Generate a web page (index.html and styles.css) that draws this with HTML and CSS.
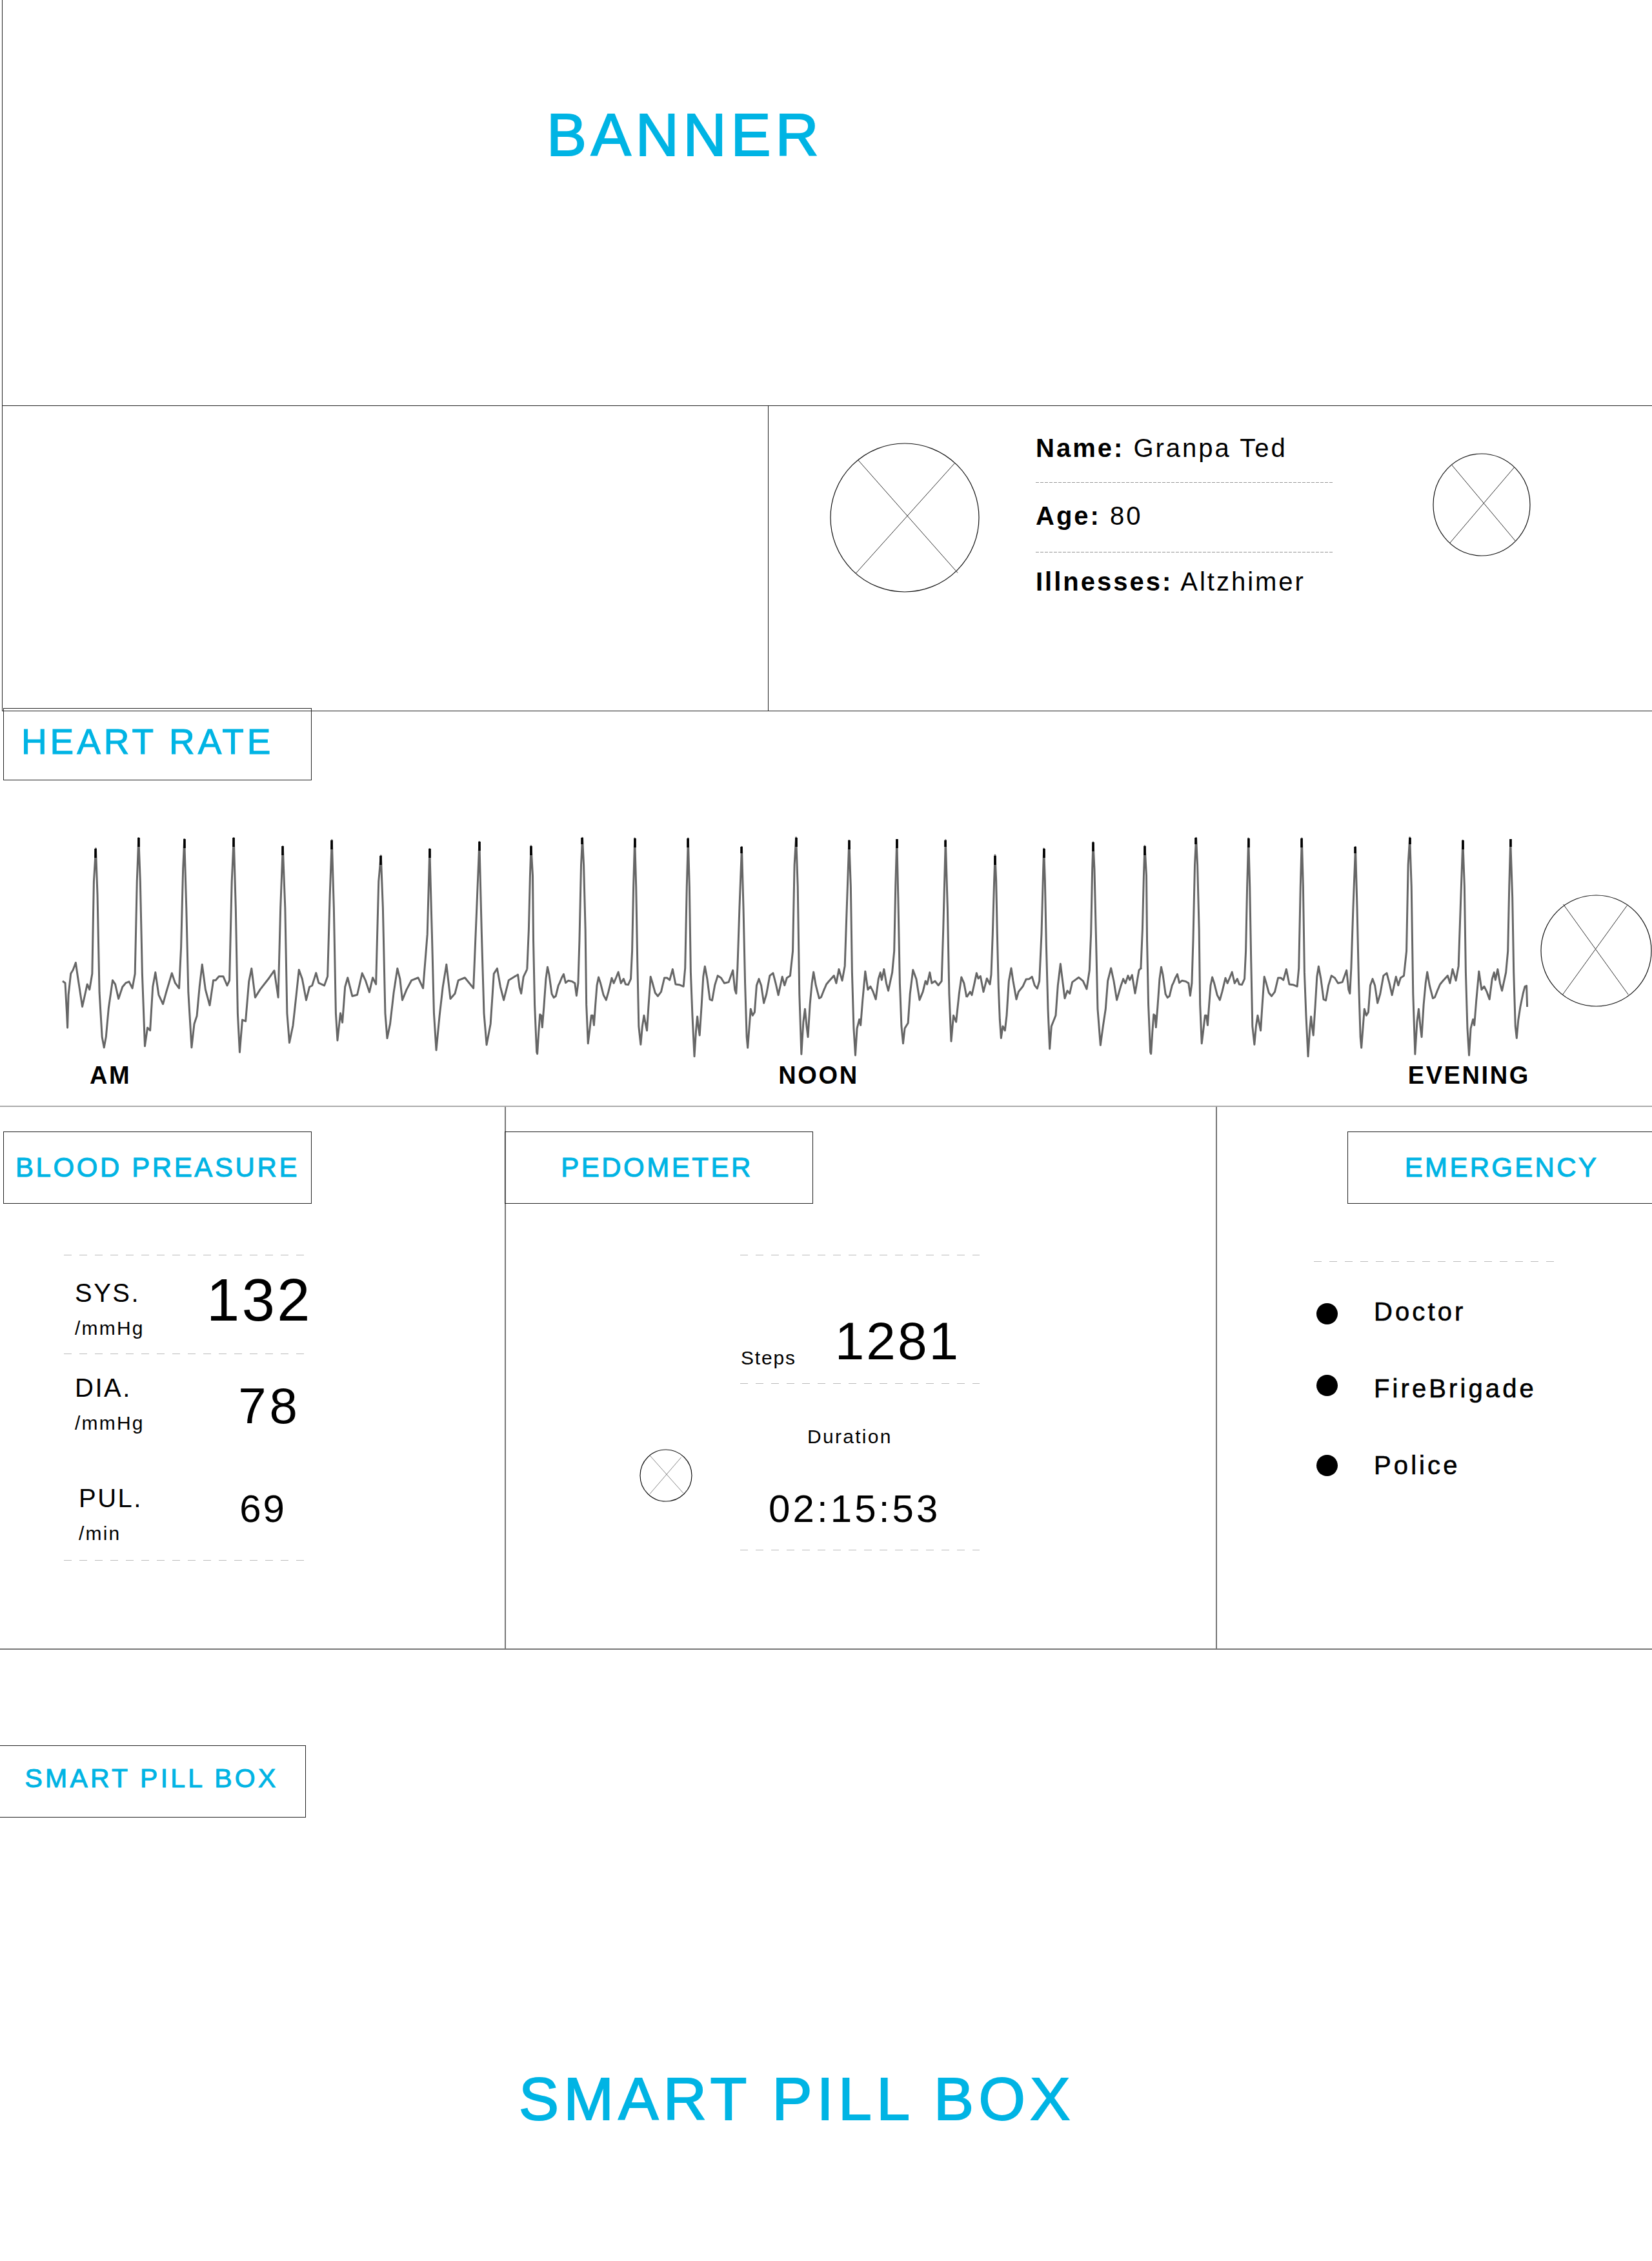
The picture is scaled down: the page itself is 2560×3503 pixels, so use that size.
FILE: index.html
```html
<!DOCTYPE html>
<html lang="en">
<head>
    <meta charset="UTF-8">
    <meta name="viewport" content="width=device-width, initial-scale=1.0">
    <title>Smart Pill Box</title>
    <link rel="stylesheet" href="styles.css">
</head>
<body>
<div class="page">
    <section class="banner">
        <h1 class="banner-title">BANNER</h1>
    </section>

    <section class="profile">
        <div class="profile-left"></div>
        <div class="profile-right">
            <svg class="avatar" viewBox="-116 -116 232 232">
                <circle r="115"/>
                <line x1="-72.5" y1="-89.5" x2="82" y2="85.5"/>
                <line x1="77.5" y1="-84.5" x2="-76" y2="86.5"/>
            </svg>
            <div class="info">
                <p class="info-row info-name"><b>Name:</b> Granpa Ted</p>
                <p class="info-row info-age"><b>Age:</b> 80</p>
                <p class="info-row info-ill"><b>Illnesses:</b> Altzhimer</p>
            </div>
            <svg class="profile-icon" viewBox="-76 -80 152 160">
                <ellipse rx="75" ry="79"/>
                <line x1="-46.6" y1="-62" x2="53" y2="57"/>
                <line x1="50.6" y1="-58" x2="-49" y2="59"/>
            </svg>
        </div>
    </section>

    <section class="heart">
        <h2 class="tag tag-heart">HEART RATE</h2>
        <div class="chart-row">
            <svg class="ecg" viewBox="88 1290 2280 357">
                <!-- traced in three pieces, the middle one repeats further along -->
                <g transform="translate(0 1080) scale(.5102 .4082)">
                    <polyline points="190,1078 198,1085 203,1200 205,1255 208,1130 215,1050 222,1035 230,1008 236,1060 250,1175 258,1130 265,1090 272,1110 280,1050 285,700 291,575 296,750 302,1120 310,1290 316,1330 322,1290 330,1180 342,1075 350,1090 360,1145 372,1100 382,1085 392,1080 402,1105 410,1050 416,700 421,535 426,700 432,1050 440,1325 448,1255 456,1265 464,1100 472,1045 482,1130 495,1165 505,1120 522,1048 532,1085 544,1105 550,950 556,650 560,540 566,800 572,1120 582,1330 590,1240 598,1210 606,1100 614,1015 624,1110 637,1170 648,1075 655,1075 665,1060 678,1060 690,1095 697,1075 704,700 710,535 716,800 722,1200 728,1348 736,1225 746,1230 756,1080 764,1030 775,1140 790,1110 815,1070 833,1038 845,1140 852,800 859,567 866,800 872,1200 879,1312 890,1245 900,1130 908,1035 918,1070 930,1150 940,1100 948,1095 960,1047 968,1085 985,1095 995,1060 1002,750 1008,543 1014,800 1020,1200 1025,1303 1034,1200 1040,1235 1048,1100 1056,1065 1070,1135 1085,1130 1100,1048 1110,1075 1122,1120 1132,1065 1142,1090 1150,700 1157,602 1163,800 1170,1200 1176,1295 1185,1240 1196,1120 1207,1030 1215,1070 1222,1150 1235,1110 1250,1075 1270,1065 1285,1105 1298,900 1305,577 1312,900 1318,1200 1325,1340 1335,1210 1345,1100 1356,1015 1368,1145 1382,1125 1392,1075 1412,1065 1438,1105 1448,800 1456,550 1463,900 1470,1200 1478,1320 1490,1240 1500,1050 1510,1030 1520,1100 1530,1150 1545,1075 1568,1057"/>
                </g>
                <g transform="translate(800 1240) scale(.5102 .3333)">
                    <polyline points="0,815 5,810 10,870 15,898 22,820 33,785"/>
                    <polyline id="ecg-mid" points="33,785 38,600 42,350 45,212 50,350 52,650 56,950 62,1170 64,1178 68,1080 72,995 76,1000 79,1055 84,960 90,830 95,775 100,810 108,900 114,917 120,910 128,860 132,848 138,825 144,808 150,848 158,838 170,842 178,850 183,908 188,850 192,650 197,300 201,175 205,300 210,600 213,950 218,1130 222,1080 228,1000 232,1000 236,1045 240,960 245,860 250,822 256,850 265,905 273,928 280,890 290,826 296,850 303,825 310,798 318,850 326,830 332,855 340,857 348,830 352,700 356,400 360,177 364,400 368,750 372,1050 378,1135 383,1050 388,1000 393,1040 397,1070 402,950 408,820 414,850 422,895 430,910 440,890 450,825 458,825 466,835 475,785 484,855 495,857 508,865 513,780 518,400 522,177 526,400 530,800 535,1000 541,1190 546,1070 550,1005 554,1060 557,1092 563,950 568,820 573,772 580,830 588,925 595,930 603,860 612,815 622,825 632,850 645,845 658,790 664,880 668,898 672,780 678,500 685,217 690,500 695,850 700,1100 703,1150 708,1050 712,970 718,1000 724,985 730,860 737,830 744,860 752,942 760,900 770,815 780,803 788,850 796,905 808,820 815,860 822,825 832,815 840,700 845,300 850,173 855,400 860,900 866,1180 872,1030 877,970 882,1050 886,1100 892,950 898,850 903,798 910,860 920,920 926,915 935,880 942,855 950,840 965,815 972,850 980,785 990,838 998,770 1004,500 1011,187 1016,400 1020,800 1025,1060 1030,1185 1035,1060 1042,1018 1046,1045 1052,930 1060,795 1068,880 1076,865 1084,890 1092,925 1100,830 1106,800 1110,835 1117,785 1124,850 1130,885 1142,800 1148,700 1152,400 1156,181"/>
                    <polyline points="1156,181 1160,450 1165,850 1170,1050 1175,1130 1180,1060 1190,1035 1196,900 1205,788 1215,830 1225,928 1235,890 1243,840 1248,855 1256,800 1262,850 1272,840 1282,860 1292,840 1297,600 1304,185 1310,500 1315,900 1321,1120 1328,1000 1336,1030 1345,900 1352,822 1360,850 1368,915"/>
                    <use href="#ecg-mid" x="1864"/>
                </g>
                <g transform="translate(1500 1280) scale(.3333)">
                    <polyline points="-6,795 10,770 18,785 28,740 40,683 48,708 58,697 72,770 88,708 102,735 108,690 115,500 122,250 126,135 131,250 136,500 142,750 148,900 154,985 162,930 172,950 180,880 190,720 201,660 210,720 225,805 235,770 255,745 270,712 285,710 298,700 310,740 322,755 332,720 342,500 350,200 353,105 358,250 364,550 372,850 380,1035 388,930 408,880 418,740 430,640 440,720 450,800 462,765 473,778 485,725 515,703 535,720 552,757 565,670 572,500 578,200 582,75 588,200 595,500 603,850 616,1018 628,930 640,850 650,720 665,660 678,720 692,808 710,745 722,710 732,730 744,695 752,715 763,692 777,777 795,670 806,658"/>
                </g>
                <g transform="translate(1760 1240) scale(.5102 .3333)">
                    <polyline points="1138,181 1144,450 1148,800 1153,1050 1157,1105 1162,1020 1168,960 1176,900 1182,865 1187,862 1189,960"/>
                </g>
                <path class="ecg-tips" d="M148 1315v14M215 1298v14M286 1300v14M362 1298v14M438 1311v14M514 1302v14M590 1326v14M666 1315v14M743 1304v14M823 1311v14M902 1298v10M984 1299v14M1066 1299v14M1149 1312v10M1234 1298v14M1316 1302v14M1390 1300v14M1465 1302v10M1542 1326v14M1618 1315v14M1694 1305v14M1774 1311v14M1853 1298v10M1935 1299v14M2017 1299v14M2100 1312v10M2185 1298v10M2267 1302v14M2341 1300v12"/>
            </svg>
            <svg class="heart-icon" viewBox="-86.5 -87 173 174">
                <ellipse rx="85.5" ry="86"/>
                <line x1="-51" y1="-72" x2="49.8" y2="68"/>
                <line x1="48" y1="-70.3" x2="-52" y2="68"/>
            </svg>
        </div>
        <div class="times">
            <span class="time-am">AM</span>
            <span class="time-noon">NOON</span>
            <span class="time-evening">EVENING</span>
        </div>
    </section>

    <section class="panels">
        <div class="panel">
            <h2 class="tag tag-panel tag-blood">BLOOD PREASURE</h2>
            <div class="vitals">
                <div class="dash"></div>
                <div class="vital vital-sys">
                    <div class="vital-label">
                        <div class="vital-name">SYS.</div>
                        <div class="vital-unit">/mmHg</div>
                    </div>
                    <div class="vital-value">132</div>
                </div>
                <div class="dash"></div>
                <div class="vital vital-dia">
                    <div class="vital-label">
                        <div class="vital-name">DIA.</div>
                        <div class="vital-unit">/mmHg</div>
                    </div>
                    <div class="vital-value">78</div>
                </div>
                <div class="vital vital-pul">
                    <div class="vital-label">
                        <div class="vital-name">PUL.</div>
                        <div class="vital-unit">/min</div>
                    </div>
                    <div class="vital-value">69</div>
                </div>
                <div class="dash"></div>
            </div>
        </div>

        <div class="panel panel-line">
            <h2 class="tag tag-panel tag-pedo">PEDOMETER</h2>
            <div class="pedo">
                <svg class="pedo-icon" viewBox="-41 -41 82 82">
                    <circle r="40"/>
                    <line x1="-25" y1="-31" x2="27" y2="27.5"/>
                    <line x1="23.5" y1="-28" x2="-25" y2="28.5"/>
                </svg>
                <div class="pedo-stats">
                    <div class="dash"></div>
                    <div class="steps">
                        <span class="steps-label">Steps</span>
                        <span class="steps-value">1281</span>
                    </div>
                    <div class="dash"></div>
                    <div class="duration-label">Duration</div>
                    <div class="duration-value">02:15:53</div>
                    <div class="dash"></div>
                </div>
            </div>
        </div>

        <div class="panel panel-line panel-emergency">
            <h2 class="tag tag-panel tag-emergency">EMERGENCY</h2>
            <div class="contacts">
                <div class="dash"></div>
                <ul class="contact-list">
                    <li><span class="dot"></span>Doctor</li>
                    <li><span class="dot"></span>FireBrigade</li>
                    <li><span class="dot"></span>Police</li>
                </ul>
            </div>
        </div>
    </section>

    <section class="pillbox">
        <h2 class="tag tag-pill">SMART PILL BOX</h2>
        <h1 class="pillbox-title">SMART PILL BOX</h1>
    </section>
</div>
</body>
</html>
```

FILE: styles.css
```css
* {
    box-sizing: border-box;
}
body {
    margin: 0;
    background: white;
    font-family: "Liberation Sans", Arial, sans-serif;
    color: black;
}
h1, h2, p, ul {
    margin: 0;
    padding: 0;
    font-weight: normal;
}
svg {
    display: block;
    flex-shrink: 0;
}
svg circle, svg ellipse {
    fill: none;
    stroke: #111;
    stroke-width: 1.2;
}
svg line {
    stroke: #333;
    stroke-width: 1;
}
.page {
    width: 2560px;
    height: 3503px;
    overflow: hidden;
}

/* banner */
.banner {
    height: 629px;
    margin-left: 3px;
    padding: 163px 0 0 843px;
    border-left: 1px solid #222;
    border-bottom: 1px solid #222;
}
.banner-title, .pillbox-title {
    font-size: 93px;
    line-height: 1;
    color: #00b4e4;
    -webkit-text-stroke: 2px #00b4e4;
}
.banner-title {
    letter-spacing: 6.8px;
}

/* profile */
.profile {
    display: flex;
    height: 473px;
    margin-left: 3px;
    border-left: 1px solid #222;
    border-bottom: 1px solid #222;
}
.profile-left {
    width: 1187px;
    border-right: 1px solid #222;
}
.profile-right {
    display: flex;
    align-items: flex-start;
}
.avatar {
    width: 232px;
    height: 232px;
    margin: 57px 0 0 95px;
}
.info {
    width: 460px;
    margin: 42px 0 0 87px;
}
.info-row {
    font-size: 40px;
    line-height: 46px;
    letter-spacing: 3px;
}
.info-row b {
    font-weight: bold;
}
.info-name {
    padding-bottom: 31px;
}
.info-age {
    padding: 28px 0 34px;
}
.info-name, .info-age {
    background: repeating-linear-gradient(to right, #999 0 5px, transparent 5px 7px) bottom / 100% 1px no-repeat;
}
.info-ill {
    padding-top: 22px;
}
.profile-icon {
    width: 152px;
    height: 160px;
    margin: 73px 0 0 155px;
}

/* section tags */
.tag {
    display: flex;
    align-items: center;
    justify-content: center;
    width: 478px;
    height: 112px;
    border: 1px solid #222;
    font-size: 42px;
    letter-spacing: 3.3px;
    color: #00b4e4;
    white-space: nowrap;
    -webkit-text-stroke: 1px #00b4e4;
}
.tag-heart {
    justify-content: flex-start;
    margin: -5px 0 0 5px;
    padding: 0 0 8px 27px;
    font-size: 55px;
    letter-spacing: 4.9px;
}
.tag-panel {
    margin-top: 38px;
}
.tag-blood {
    margin-left: 5px;
    letter-spacing: 3.6px;
}
.tag-pedo {
    margin-left: -2px;
    padding-right: 6px;
    letter-spacing: 3.5px;
}
.tag-emergency {
    margin-left: 202px;
}
.tag-pill {
    margin: 148px 0 0 -4px;
    padding-bottom: 9px;
    font-size: 41px;
    letter-spacing: 4.2px;
}

/* heart rate */
.heart {
    display: flow-root;
    height: 611px;
}
.chart-row {
    display: flex;
    align-items: flex-start;
    margin: 81px 0 0 88px;
}
.ecg {
    width: 2280px;
    height: 357px;
}
.ecg polyline {
    fill: none;
    stroke: #666;
    stroke-width: 3;
    stroke-linejoin: round;
    vector-effect: non-scaling-stroke;
}
.ecg-tips {
    fill: none;
    stroke: black;
    stroke-width: 3.5;
}
.heart-icon {
    width: 173px;
    height: 174px;
    margin: 96px 0 0 19px;
}
.times {
    display: flex;
    padding-left: 139px;
    font-size: 38px;
    line-height: 38px;
    font-weight: bold;
    letter-spacing: 2.6px;
}
.time-noon {
    margin-left: 1003px;
}
.time-evening {
    margin-left: 851px;
}

/* lower panels */
.panels {
    display: grid;
    grid-template-columns: 782px 1102px 676px;
    height: 843px;
    border-top: 2px solid #aaa;
    border-bottom: 2px solid #777;
}
.panel-line {
    border-left: 2px solid #777;
}
.dash {
    height: 1px;
    background: repeating-linear-gradient(to right, #bbb 0 12px, transparent 12px 24px);
}

/* blood pressure */
.vitals {
    width: 373px;
    margin: 79px 0 0 99px;
}
.vital {
    display: flex;
    justify-content: space-between;
    align-items: flex-start;
    padding-left: 17px;
}
.vital-name {
    height: 46px;
    margin-bottom: 15px;
    font-size: 40px;
    line-height: 46px;
    letter-spacing: 2.5px;
}
.vital-unit {
    height: 34px;
    font-size: 30px;
    line-height: 34px;
    letter-spacing: 2.2px;
}
.vital-value {
    line-height: 1;
}
.vital-sys {
    padding-bottom: 22px;
}
.vital-sys .vital-label {
    margin-top: 35px;
}
.vital-sys .vital-value {
    margin: 23px -12px 0 0;
    font-size: 92px;
    letter-spacing: 3.5px;
}
.vital-dia .vital-label {
    margin-top: 29px;
}
.vital-dia .vital-value {
    margin: 41px 6px 0 0;
    font-size: 78px;
    letter-spacing: 5px;
}
.vital-pul {
    padding-left: 23px;
    padding-bottom: 24px;
}
.vital-pul .vital-label {
    margin-top: 76px;
}
.vital-pul .vital-value {
    margin: 86px 28px 0 0;
    font-size: 60px;
    letter-spacing: 3px;
}

/* pedometer */
.pedo {
    display: flex;
    align-items: flex-start;
    margin-top: 79px;
}
.pedo-icon {
    width: 82px;
    height: 82px;
    margin: 301px 0 0 207px;
}
.pedo-icon line {
    stroke: #888;
}
.pedo-stats {
    width: 371px;
    margin-left: 74px;
}
.steps {
    display: flex;
    align-items: flex-end;
    height: 198px;
}
.steps-label {
    margin: 0 0 22px 1px;
    font-size: 30px;
    line-height: 34px;
    letter-spacing: 1.8px;
}
.steps-value {
    margin: 0 0 24px 60px;
    font-size: 82px;
    line-height: 1;
    letter-spacing: 3px;
}
.duration-label {
    margin: 65px 0 0 104px;
    font-size: 30px;
    line-height: 34px;
    letter-spacing: 2.3px;
}
.duration-value {
    margin: 65px 0 33px 44px;
    font-size: 60px;
    line-height: 1;
    letter-spacing: 4.1px;
}

/* emergency */
.contacts {
    width: 372px;
    margin: 89px 0 0 150px;
}
.contact-list {
    margin-top: 54px;
    list-style: none;
}
.contact-list li {
    display: flex;
    align-items: flex-start;
    height: 119px;
    font-size: 40px;
    line-height: 46px;
    letter-spacing: 4.1px;
    -webkit-text-stroke: 0.6px black;
}
.dot {
    width: 33px;
    height: 33px;
    margin: 10px 56px 0 4px;
    border-radius: 50%;
    background: black;
}
.contact-list li:nth-child(2) .dot {
    margin-top: 2px;
}
.contact-list li:nth-child(3) .dot {
    margin-top: 7px;
}

/* pill box */
.pillbox-title {
    margin: 390px 0 0 804px;
    letter-spacing: 7.4px;
}
```
